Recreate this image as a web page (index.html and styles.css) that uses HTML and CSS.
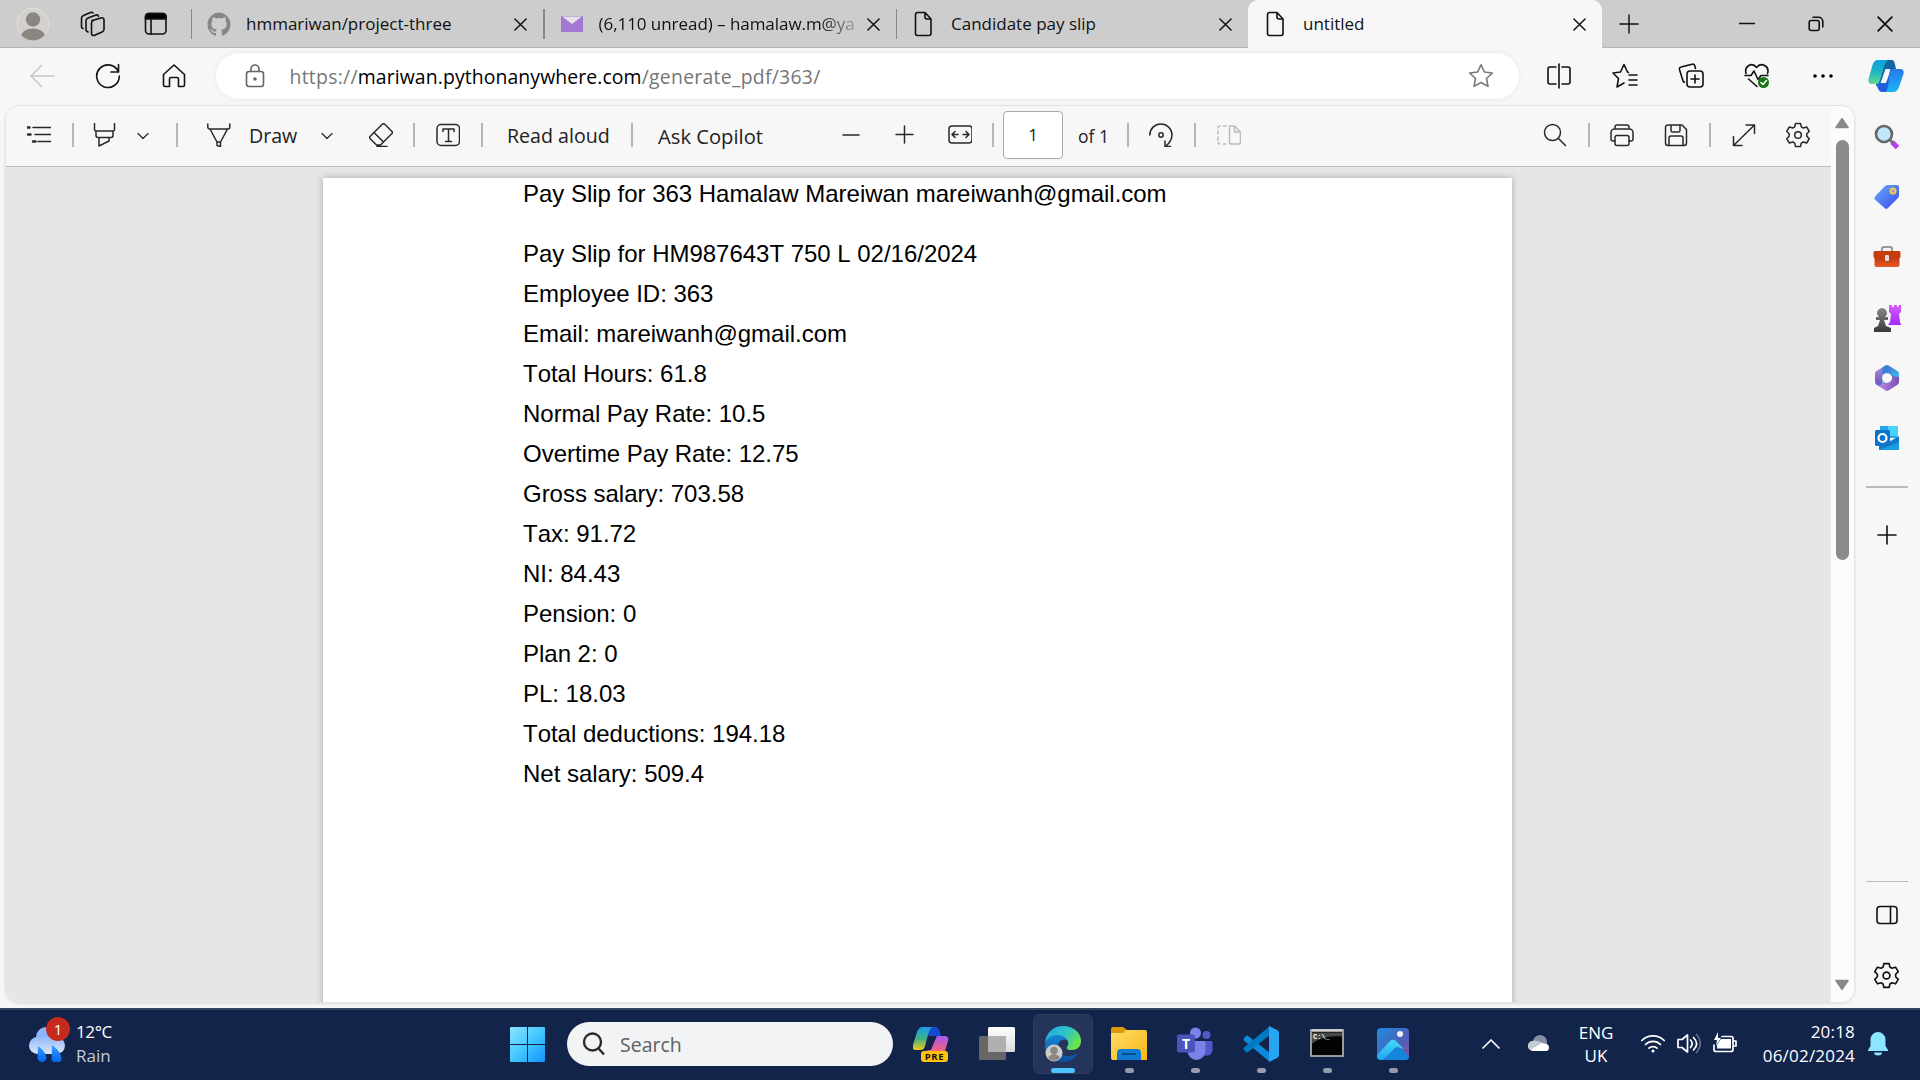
FILE: index.html
```html
<!DOCTYPE html>
<html lang="en">
<head>
<meta charset="utf-8">
<title>untitled</title>
<link rel="stylesheet" href="styles.css">
</head>
<body>
<svg class="defs" width="0" height="0">
  <defs>
    <linearGradient id="win" gradientUnits="userSpaceOnUse" x1="0" y1="0" x2="35" y2="35"><stop offset="0" stop-color="#8ae3ff"/><stop offset=".5" stop-color="#45c8ff"/><stop offset="1" stop-color="#0f94fb"/></linearGradient>
    <linearGradient id="cpa" x1="0" y1="0" x2="0" y2="1"><stop offset="0" stop-color="#0ba0dc"/><stop offset=".5" stop-color="#1fb6c4"/><stop offset="1" stop-color="#66d98b"/></linearGradient>
    <linearGradient id="cpb" x1="0" y1="0" x2="0" y2="1"><stop offset="0" stop-color="#2a78e4"/><stop offset="1" stop-color="#18b6f6"/></linearGradient>
    <linearGradient id="cpc" x1="0" y1="0" x2="0" y2="1"><stop offset="0" stop-color="#1a9cf0"/><stop offset=".5" stop-color="#3fb083"/><stop offset="1" stop-color="#efcb17"/></linearGradient>
    <linearGradient id="cpd" x1="0" y1="0" x2="0" y2="1"><stop offset="0" stop-color="#a657f0"/><stop offset="1" stop-color="#f4647e"/></linearGradient>
    <linearGradient id="edgeTop" x1="0" y1="0" x2="1" y2=".5"><stop offset="0" stop-color="#23a6e8"/><stop offset=".6" stop-color="#2fc6c4"/><stop offset="1" stop-color="#6be34c"/></linearGradient>
    <linearGradient id="edgeLow" x1="0" y1="0" x2="0" y2="1"><stop offset="0" stop-color="#1787d6"/><stop offset="1" stop-color="#0a4f9d"/></linearGradient>
    <linearGradient id="fold" x1="0" y1="0" x2="1" y2="1"><stop offset="0" stop-color="#ffdc6b"/><stop offset="1" stop-color="#f8b713"/></linearGradient>
    <linearGradient id="cloud" x1="0" y1="0" x2="0" y2="1"><stop offset="0" stop-color="#94b9fb"/><stop offset="1" stop-color="#dbe6f7"/></linearGradient>
    <linearGradient id="drop" x1="0" y1="0" x2="0" y2="1"><stop offset="0" stop-color="#37a0ff"/><stop offset="1" stop-color="#0062e8"/></linearGradient>
    <linearGradient id="tag" x1="0" y1="0" x2="1" y2="1"><stop offset="0" stop-color="#66aefc"/><stop offset="1" stop-color="#3d47ef"/></linearGradient>
    <linearGradient id="box" x1="0" y1="0" x2="0" y2="1"><stop offset="0" stop-color="#b53410"/><stop offset="1" stop-color="#e65a1e"/></linearGradient>
    <linearGradient id="pawn" x1="0" y1="0" x2="0" y2="1"><stop offset="0" stop-color="#888"/><stop offset="1" stop-color="#383838"/></linearGradient>
    <linearGradient id="rook" x1="0" y1="0" x2="0" y2="1"><stop offset="0" stop-color="#d65cf8"/><stop offset="1" stop-color="#a02bff"/></linearGradient>
    <linearGradient id="photo" x1="0" y1="0" x2="1" y2="1"><stop offset="0" stop-color="#1b8ee0"/><stop offset=".6" stop-color="#4f5fb8"/><stop offset="1" stop-color="#8a4fa5"/></linearGradient>
    <linearGradient id="hill" x1="0" y1="0" x2="0" y2="1"><stop offset="0" stop-color="#46d8fb"/><stop offset="1" stop-color="#1ea7ef"/></linearGradient>
    <linearGradient id="tv" x1="0" y1="0" x2="0" y2="1"><stop offset="0" stop-color="#fff"/><stop offset="1" stop-color="#dadada"/></linearGradient>
    <linearGradient id="m3a" x1="0" y1="1" x2="0" y2="0"><stop offset="0" stop-color="#6b55b8"/><stop offset="1" stop-color="#b186df"/></linearGradient>
    <linearGradient id="m3b" x1="0" y1="0" x2="1" y2="1"><stop offset="0" stop-color="#3a6fd0"/><stop offset="1" stop-color="#3fc3ee"/></linearGradient>
    <linearGradient id="m3c" x1="0" y1="0" x2="1" y2="0"><stop offset="0" stop-color="#c08ae0"/><stop offset="1" stop-color="#7350b5"/></linearGradient>
    <symbol id="x" viewBox="0 0 14 14"><path d="M1 1l12 12M13 1L1 13"/></symbol>
    <symbol id="doc" viewBox="0 0 20 26"><path d="M3.500 1.500h7.500l6 6.500v14.500a2 2 0 0 1-2 2H3.500a2 2 0 0 1-2-2v-19a2 2 0 0 1 2-2zM11 1.500v4.500a2 2 0 0 0 2 2h4"/></symbol>
    <symbol id="chev" viewBox="0 0 12 12"><path d="M1 3.500l5 5 5-5"/></symbol>
    <symbol id="gear" viewBox="0 0 26 26"><path d="M10.500 1.500h5l.8 3.400 1.900 1.100 3.500-1 2.600 4.300-2.500 2.500v2.400l2.500 2.500-2.600 4.300-3.500-1-1.900 1.100-.8 3.400h-5l-.8-3.400-1.900-1.100-3.500 1-2.600-4.300 2.500-2.500v-2.400L1.700 9.300 4.300 5l3.500 1 1.900-1.100z"/><circle cx="13" cy="13" r="3.300"/></symbol>
  </defs>
</svg>

<header class="tabstrip">
  <div class="tab-tools">
    <svg class="avatar" viewBox="0 0 34 34"><circle cx="17" cy="17" r="16" fill="#d3d1cd" stroke="#e2e0d8"/><circle cx="17" cy="12.500" r="7.200" fill="#8b8680"/><path d="M5 28a12.500 9 0 0 1 24 0 16 16 0 0 1-24 0z" fill="#8b8680"/></svg>
    <svg class="ln i26" viewBox="0 0 26 26"><path d="M12 9.500l9-2.500a2 2 0 0 1 3 2v9.500a3 3 0 0 1-2 2.500l-8 3.500a2 2 0 0 1-2.500-2V12a2.600 2.600 0 0 1 2-2.500M8 21l-.8-.5A2 2 0 0 1 6 19V9.500A3 3 0 0 1 8 7l8-3a2 2 0 0 1 2.500 1.200M3 17.500A2 2 0 0 1 1.500 16V7A3 3 0 0 1 3.500 4.500l7-3A2 2 0 0 1 13 2"/></svg>
    <svg class="ln i24" viewBox="0 0 24 24"><rect x="1.500" y="1.500" width="20.500" height="20.500" rx="3.500"/><path d="M1.500 7V4.500a3 3 0 0 1 3-3H19a3 3 0 0 1 3 3V7z" fill="#000"/><path d="M7 7v15"/></svg>
  </div>
  <div class="tab">
    <svg class="i24" viewBox="0 0 24 24"><path fill="#84878a" d="M12 .5a12 12 0 0 0-3.800 23.200c.6.100.8-.3.800-.6v-2.200c-3.300.7-4-1.400-4-1.400-.6-1.400-1.300-1.800-1.300-1.800-1.100-.7.100-.7.100-.7 1.200.1 1.800 1.200 1.800 1.200 1.100 1.900 2.800 1.300 3.500 1 .1-.8.400-1.300.8-1.600-2.700-.3-5.500-1.300-5.500-6 0-1.300.5-2.400 1.200-3.200-.1-.3-.5-1.500.1-3.200 0 0 1-.3 3.300 1.200a11.500 11.500 0 0 1 6 0C17.300 5 18.300 5.300 18.300 5.300c.7 1.700.2 2.900.1 3.200.8.800 1.200 1.900 1.200 3.200 0 4.700-2.800 5.700-5.500 6 .4.400.8 1.100.8 2.200v3.200c0 .3.200.7.800.6A12 12 0 0 0 12 .5z"/></svg>
    <span class="tab-title">hmmariwan/project-three</span><svg class="close ln"><use href="#x"/></svg>
  </div>
  <div class="tab">
    <svg class="i24" viewBox="0 0 24 24"><rect x="1" y="4" width="22" height="16" rx="1" fill="#a378d2"/><path d="M2 4.500h20L12 12z" fill="#e6e1ea"/></svg>
    <span class="tab-title long">(6,110 unread) – hamalaw.m@ya</span><svg class="close ln"><use href="#x"/></svg>
  </div>
  <div class="tab">
    <svg class="ln doc"><use href="#doc"/></svg>
    <span class="tab-title">Candidate pay slip</span><svg class="close ln"><use href="#x"/></svg>
  </div>
  <div class="tab active">
    <svg class="ln doc"><use href="#doc"/></svg>
    <span class="tab-title">untitled</span><svg class="close ln"><use href="#x"/></svg>
  </div>
  <svg class="newtab ln" viewBox="0 0 22 22"><path d="M11 1v20M1 11h20"/></svg>
  <div class="win-controls">
    <svg class="ln i16" viewBox="0 0 16 16"><path d="M.5 7.500h15"/></svg>
    <svg class="ln i16" viewBox="0 0 16 16"><rect x="1.200" y="4.500" width="10" height="10" rx="2"/><path d="M5 1.200h5.500a4.300 4.300 0 0 1 4.300 4.300V11"/></svg>
    <svg class="ln i16" viewBox="0 0 14 14"><use href="#x"/></svg>
  </div>
</header>

<nav class="navbar">
  <svg class="ln i26 dim" viewBox="0 0 26 26"><path d="M25 13H2M12.500 2.500L2 13l10.500 10.500"/></svg>
  <svg class="ln i26" viewBox="0 0 26 26"><path d="M23.500 9A11.300 11.300 0 1 0 24.300 13M23.500 1.500V9H16"/></svg>
  <svg class="ln i26" viewBox="0 0 26 26"><path d="M2.500 11.500L13 2l10.500 9.500V22a1.500 1.500 0 0 1-1.500 1.500h-4.500V16a1.500 1.500 0 0 0-1.500-1.500h-6A1.500 1.500 0 0 0 8.500 16v7.500H4A1.500 1.500 0 0 1 2.500 22z"/></svg>
  <div class="address">
    <svg class="ln i24 lock" viewBox="0 0 24 24"><rect x="3.500" y="7.500" width="17" height="15" rx="2.500"/><path d="M8 7.500V5a4 4 0 0 1 8 0v2.500"/><circle cx="12" cy="15" r="1" fill="#666"/></svg>
    <span class="url">https://<b>mariwan.pythonanywhere.com</b>/generate_pdf/363/</span>
    <svg class="ln i26 star" viewBox="0 0 26 26"><path d="M13 1.800l3.400 7.200 7.900 1-5.800 5.500 1.500 7.900-7-3.900-7 3.900 1.500-7.900L1.700 10l7.900-1z"/></svg>
  </div>
  <svg class="ln i26 split" viewBox="0 0 26 26"><path d="M13 1v24M10 4H4a2 2 0 0 0-2 2v13a2 2 0 0 0 2 2h6M16 4h6a2 2 0 0 1 2 2v13a2 2 0 0 1-2 2h-6"/></svg>
  <svg class="ln i26" viewBox="0 0 26 26"><path d="M16.500 9.500l-1-.5L12 1.500 8.500 9l-7.500 1 5.500 5.500L5 24l7-4M17 12h8M17 17h8M17 22h8"/></svg>
  <svg class="ln i26" viewBox="0 0 26 26"><rect x="9" y="8" width="16" height="16" rx="3"/><path d="M17 12v8M13 16h8M17.500 5.500l-.8-3A2 2 0 0 0 14 1.300L3 4a2 2 0 0 0-1.500 2.700l3.500 11a2 2 0 0 0 1.500 1.500"/></svg>
  <svg class="ln i26" viewBox="0 0 26 26"><path d="M2 10.500C0 3 8-1.500 12.500 4.500 17-1.500 26 3 23.500 10.500M1 12.500h6l3-4.500 4 8.500 3-4h7M4.500 16l8.500 7.500"/><circle cx="19.500" cy="19.500" r="5.500" fill="#147514" stroke="none"/><path d="M17 19.500l2 2 3.500-4" stroke="#fff"/></svg>
  <svg class="i26" viewBox="0 0 26 26"><circle cx="5" cy="13" r="1.800"/><circle cx="13" cy="13" r="1.800"/><circle cx="21" cy="13" r="1.800"/></svg>
  <svg class="copilot" viewBox="0 0 36 34"><path d="M10 1h13c3 0 3.500 2 4 4.500L28 10h-8l-5 17H8z" fill="#12669f"/><path d="M8 24h10l5-14h8l-7 21c-1 2-2 2-5 2h-5c-3 0-4-3-6-9z" fill="#235de0"/><path d="M10 1h10c-2 1-3 3-4 7l-4 13c-1 3-2 4-4 4H4c-3 0-4-2-3.500-5L4.500 6C5.500 3 7 1 10 1z" fill="url(#cpa)"/><path d="M17.500 10H22l-4.500 14h-5z" fill="#f7f7f7"/><path d="M22 10h9.500c4 0 4.500 2 4 5L31 28c-1 3-3 5-6 5h-8c2-1 2-2 3-5z" fill="url(#cpb)"/></svg>
</nav>

<div class="middle">
  <main class="frame">
    <div class="viewer">
      <div class="pdfbar">
        <svg class="ln i24" viewBox="0 0 24 24"><path d="M6 4.500h18M8 11.500h16M11 18.500h13"/><path d="M0 4.500h2.500M1 11.500h2.500M6 18.500h2.500" stroke-width="2.500"/></svg>
        <i></i>
        <svg class="ln i24" viewBox="0 0 24 24"><path d="M1.500 0v6.500a1.500 1.500 0 0 0 1.500 1.500h17a1.500 1.500 0 0 0 1.500-1.500V0M3 8v4.500a2 2 0 0 0 2 2h13a2 2 0 0 0 2-2V8M6 14.500V23l10-5v-3.500"/></svg>
        <svg class="ln c12"><use href="#chev"/></svg>
        <i></i>
        <svg class="ln i24" viewBox="0 0 24 24"><path d="M.8 1v3a2 2 0 0 0 2 2h18a2 2 0 0 0 2-2V1M3 6l7 13h3.500l7-13M10 19v3.500l3.500 1V19"/></svg>
        <span>Draw</span>
        <svg class="ln c12"><use href="#chev"/></svg>
        <svg class="ln i24" viewBox="0 0 24 24"><path d="M13 1.500l-12 12a1.500 1.500 0 0 0 0 2l6.500 6.500h4L23 10.500a1.500 1.500 0 0 0 0-2l-7-7a2 2 0 0 0-3 0zM5 9.500l9.500 9.500M8 23.500h10"/></svg>
        <i></i>
        <svg class="ln i24" viewBox="0 0 24 24"><rect x="1" y="1.500" width="22.500" height="21" rx="4"/><path d="M7 8.500V6h11v2.500M12.500 6v12.500M9.500 18.500h6"/></svg>
        <i></i>
        <span class="read">Read aloud</span>
        <i></i>
        <span class="ask">Ask Copilot</span>
        <svg class="ln i24" viewBox="0 0 24 24"><path d="M4 12h16"/></svg>
        <svg class="ln i24" viewBox="0 0 24 24"><path d="M4 11.500h17M12.500 3v17"/></svg>
        <svg class="ln i24" viewBox="0 0 24 24"><rect x="1" y="3" width="23" height="17" rx="3"/><path d="M10 11.500H4.500M7 8.500l-3 3 3 3M15 11.500h5.500M18 8.500l3 3-3 3"/></svg>
        <i></i>
        <span class="pagebox">1</span>
        <span class="of">of 1</span>
        <i></i>
        <svg class="ln i24" viewBox="0 0 24 24"><path d="M.8 12A11 11 0 0 1 12 1a11 11 0 0 1 11 11c0 4-2 7.500-6 11M16 18v5.500h5.500"/><circle cx="12" cy="12" r="2.200"/></svg>
        <i></i>
        <svg class="ln i24 dim2" viewBox="0 0 24 24"><path d="M12.500 3h5l6 6v10a2 2 0 0 1-2 2h-7a2 2 0 0 1-2-2zM17.500 3v6h6M9 3H6.500M3 3a2 2 0 0 0-2 2M1 8v3M1 14v3M1 19.500A2 2 0 0 0 3 21M6.500 21H9"/></svg>
        <svg class="ln i24" viewBox="0 0 24 24"><circle cx="9.500" cy="9.500" r="8"/><path d="M15.500 15.500l7 7"/></svg>
        <i></i>
        <svg class="ln i24" viewBox="0 0 24 24"><path d="M5 18H3a2 2 0 0 1-2-2V9.500A3.500 3.500 0 0 1 4.500 6h15A3.500 3.500 0 0 1 23 9.500V16a2 2 0 0 1-2 2h-2M5 6V4a2 2 0 0 1 2-2h10a2 2 0 0 1 2 2v2"/><rect x="5" y="12.500" width="14" height="10" rx="2"/></svg>
        <svg class="ln i24" viewBox="0 0 24 24"><path d="M4 2h14l4.500 4.500V20a2.500 2.500 0 0 1-2.500 2.500H4A2.500 2.500 0 0 1 1.500 20V4.500A2.500 2.500 0 0 1 4 2zM7 2v5.500a1.500 1.500 0 0 0 1.500 1.500h6A1.500 1.500 0 0 0 16 7.500V2M5 22.500V15a2 2 0 0 1 2-2h10a2 2 0 0 1 2 2v7.500"/></svg>
        <i></i>
        <svg class="ln i24" viewBox="0 0 24 24"><path d="M14 2h8.500v8.500M22.500 2L1.500 22.500M1.500 13.500v9H10"/></svg>
        <svg class="ln i26 options"><use href="#gear"/></svg>
      </div>
      <div class="canvas">
        <article class="page">
          <h1>Pay Slip for 363 Hamalaw Mareiwan mareiwanh@gmail.com</h1>
          <p>Pay Slip for HM987643T 750 L 02/16/2024</p>
          <p>Employee ID: 363</p>
          <p>Email: mareiwanh@gmail.com</p>
          <p>Total Hours: 61.8</p>
          <p>Normal Pay Rate: 10.5</p>
          <p>Overtime Pay Rate: 12.75</p>
          <p>Gross salary: 703.58</p>
          <p>Tax: 91.72</p>
          <p>NI: 84.43</p>
          <p>Pension: 0</p>
          <p>Plan 2: 0</p>
          <p>PL: 18.03</p>
          <p>Total deductions: 194.18</p>
          <p>Net salary: 509.4</p>
        </article>
      </div>
    </div>
    <div class="scroll">
      <svg viewBox="0 0 14 11"><path d="M7 1.500L12.500 9.500h-11z"/></svg>
      <div class="thumb"></div>
      <svg class="down" viewBox="0 0 14 11"><path d="M7 9.500L12.500 1.500h-11z"/></svg>
    </div>
  </main>
  <aside class="sidebar">
    <svg viewBox="0 0 28 28"><path d="M19 19l5.500 5.500" stroke="#b83cf5" stroke-width="5"/><path d="M16 16l4 4" stroke="#777" stroke-width="3"/><circle cx="11" cy="11" r="8" fill="#bfe6fb" stroke="#666" stroke-width="2.600"/></svg>
    <svg viewBox="0 0 28 28"><path d="M14 2h10a2 2 0 0 1 2 2v9a3 3 0 0 1-1 2L15 25a2.500 2.500 0 0 1-3.500 0L2.500 17a2.500 2.500 0 0 1 0-4L12 3z" fill="url(#tag)"/><circle cx="20" cy="8" r="2.600" fill="#8b9cf9" stroke="#ffd02c" stroke-width="1.800"/></svg>
    <svg viewBox="0 0 28 28"><path d="M9 8V6a2 2 0 0 1 2-2h6a2 2 0 0 1 2 2v2" fill="none" stroke="#999" stroke-width="2.200"/><rect x="1.500" y="13" width="25" height="11" rx="2" fill="url(#box)"/><rect x=".5" y="8" width="27" height="7" rx="1.500" fill="#c53d0d"/><rect x="12" y="12" width="4" height="6" rx="1" fill="#ddd"/></svg>
    <svg viewBox="0 0 28 28"><path d="M16 1h3v2h2V1h3v2h1.500V1H28v7l-2 2 1 8 1 3H15l2-3 1-8-2-2z" fill="url(#rook)"/><path d="M1 28v-4l4-2 2-6H3v-3h3a5 5 0 1 1 6 0h3v3h-4l2 6 5 2v4z" fill="url(#pawn)"/></svg>
    <svg viewBox="0 0 28 28"><path d="M13 1.300a3 3 0 0 1 2 0L24.500 7A3 3 0 0 1 26 9.500V17l-7-4.500L12 9 9 11V3.800z" fill="url(#m3b)"/><path d="M13 1.300L9.500 3.500V18l-2 5L3.500 20.700A3 3 0 0 1 2 18V9.500A3 3 0 0 1 3.500 7z" fill="url(#m3a)"/><path d="M13 1.300L9.500 3.500V19L3 20.500c3 0 6.500 1 9.500-.5l1-10L20 6z" fill="#3f7fd6" opacity=".75"/><path d="M26 13v5a3 3 0 0 1-1.500 2.700L15.500 26.500a3 3 0 0 1-3 0L4 21c4 1 8-1 15-5.500V12z" fill="url(#m3c)"/><circle cx="14" cy="14" r="4.800" fill="#f7f7f7"/></svg>
    <svg viewBox="0 0 28 28"><path d="M7 2h17v12H7z" fill="#28a8ea"/><path d="M15 2h10v10H15z" fill="#48d3fa"/><path d="M6 13l10 5 10-6v14H6z" fill="#1479c9"/><path d="M6 26l20-8v8z" fill="#1b9de2"/><rect x="2" y="6" width="15" height="16" rx="1.500" fill="#0874ca"/><circle cx="9.500" cy="14" r="4" fill="none" stroke="#fff" stroke-width="2.200"/></svg>
    <hr>
    <svg class="ln add" viewBox="0 0 28 28"><path d="M14 5v18M5 14h18"/></svg>
    <hr class="low">
    <svg class="ln panel" viewBox="0 0 28 28"><rect x="4" y="5.500" width="20" height="17" rx="3"/><path d="M17.500 5.500v17"/></svg>
    <svg class="ln setting"><use href="#gear"/></svg>
  </aside>
</div>

<footer class="taskbar">
  <div class="weather">
    <svg viewBox="0 0 36 36"><circle cx="17" cy="11" r="10" fill="#8bb4fa"/><rect x="0" y="11" width="36" height="17" rx="8.500" fill="url(#cloud)"/><path d="M9 20c5 4 8 7 8.500 12a4.500 4 0 0 1-9 0zM23 19c5 4 9 7 9.500 14a5 4 0 0 1-10 0z" fill="url(#drop)"/></svg>
    <b class="badge">1</b>
    <div><span>12°C</span><span class="rain">Rain</span></div>
  </div>
  <svg class="start" viewBox="0 0 35 35"><path fill="url(#win)" d="M1 0h16v17H0V1a1 1 0 0 1 1-1zm17 0h16a1 1 0 0 1 1 1v16H18zM0 18h17v17H1a1 1 0 0 1-1-1zm18 0h17v16a1 1 0 0 1-1 1H18z"/></svg>
  <div class="search"><svg viewBox="0 0 24 24"><circle cx="10.500" cy="10" r="8.500"/><path d="M16.500 16.500l5.500 6"/></svg>Search</div>
  <div class="apps">
    <div class="app"><svg viewBox="0 0 36 36"><path d="M8 1h14c3 0 4 2 5 5l1 4h-6l-6 0-4-6z" fill="#1649ce"/><path d="M10 1h10c-3 1-4 4-5 8l-3 11c-1 3-2 4-5 4H3c-3 0-4-2-3-5l4-13C5 3 7 1 10 1z" fill="url(#cpc)"/><path d="M24 10h7c4 0 5 2 4 5l-3 10H8c6 0 9 0 11-4z" fill="url(#cpd)"/><path d="M18 10h5l-5 14h-5z" fill="#12244a"/></svg><em>PRE</em></div>
    <div class="app"><svg viewBox="0 0 36 36"><rect y="10" width="27" height="24" rx="1.500" fill="#666"/><rect x="9" y="1" width="27" height="25" rx="1.500" fill="url(#tv)"/><path d="M9 10h18v16H9z" fill="#b0b0b0"/></svg></div>
    <div class="app on"><svg viewBox="0 0 36 36"><path d="M0 17C1 6 9 0 18 0c11 0 18 7 18 15 0 6-4 9-9 9-6 0-6-2-4.500-4 3-4-2-10-8.500-10C7 10 2 13 0 17z" fill="url(#edgeTop)"/><path d="M0 20C0 13 5 9 12 9c5 0 9 2 10 5-6-2-9 2-9 7 0 9 9 12 20 6-4 6-9 9-15 9C8 36 0 29 0 20z" fill="url(#edgeLow)"/><circle cx="9" cy="27" r="8.500" fill="#cfcdca"/><circle cx="9" cy="24.500" r="3.800" fill="#8b8680"/><path d="M3 32c2-5 10-5 12 0a8 8 0 0 1-12 0z" fill="#8b8680"/></svg><u></u></div>
    <div class="app"><svg viewBox="0 0 36 36"><path d="M0 3a2 2 0 0 1 2-2h10l4 3v5H0z" fill="#dd9a05"/><path d="M0 7h12l3-3h19a2 2 0 0 1 2 2v28H2a2 2 0 0 1-2-2z" fill="url(#fold)"/><path d="M6 34V27a4 4 0 0 1 4-4h16a4 4 0 0 1 4 4v7z" fill="#0f7ad2"/><path d="M11 28h14" stroke="#074c91" stroke-width="2"/></svg><u></u></div>
    <div class="app"><svg viewBox="0 0 36 36"><circle cx="29.500" cy="9" r="4" fill="#5059c9"/><path d="M25 15h9a1.500 1.500 0 0 1 1.500 1.500V24a6 6 0 0 1-9 5z" fill="#5059c9"/><circle cx="18.500" cy="7" r="5.500" fill="#7b83eb"/><path d="M10 15h17a1.500 1.500 0 0 1 1.500 1.500V25a9 9 0 0 1-18 0z" fill="#7b83eb"/><rect y="8.500" width="18" height="18" rx="2" fill="#4b53bc"/></svg><strong>T</strong><u></u></div>
    <div class="app"><svg viewBox="0 0 36 36"><path d="M4.500 9.500L27 27v9L1 14.500a2 2 0 0 1 0-2.500l2-2.200z" fill="#0b8bd9"/><path d="M4.500 26.500L27 9V0L1 21.500a2 2 0 0 0 0 2.500l2 2.200z" fill="#0079c4"/><path d="M26 0l8 4a3 3 0 0 1 2 3v22a3 3 0 0 1-2 3l-8 4z" fill="#27a5f2"/></svg><u></u></div>
    <div class="app"><svg viewBox="0 0 36 36"><rect x="2" y="4" width="32" height="26" fill="#030303" stroke="#b9bcc1" stroke-width="1.600"/><path d="M3 4.500h30" stroke="#d2d2d2" stroke-width="2.500"/><path d="M3 6.500h30v4C20 9 8 13 3 18z" fill="#484848"/></svg><small>C:\_</small><u></u></div>
    <div class="app"><svg viewBox="0 0 36 36"><rect x="2" y="2" width="32" height="32" rx="4" fill="url(#photo)"/><path d="M9 34l11-12a4 4 0 0 1 5 0l9 8a4 4 0 0 1-4 4z" fill="#1586db"/><path d="M2 29L15 15a4 4 0 0 1 6 0l8 8-4-1a4 4 0 0 0-5 0L8 34H6a4 4 0 0 1-4-4z" fill="url(#hill)"/><circle cx="25" cy="8" r="3" fill="#f3eef5"/></svg><u></u></div>
  </div>
  <div class="tray">
    <svg class="w up" viewBox="0 0 24 24"><path d="M4 16l8-8 8 8"/></svg>
    <svg class="w od" viewBox="0 0 24 24"><circle cx="12" cy="11" r="7" fill="#848fa5" stroke="none"/><path d="M5 20a5 5 0 0 1 0-10c5-1 9 3 14 3a4 4 0 0 1 0 7z" fill="#fff" stroke="none"/><path d="M0 15a5 5 0 0 1 5-5c4-1 6 1 9 2L2 19z" fill="#c5cad3" stroke="none"/></svg>
    <div class="lang"><span>ENG</span><span>UK</span></div>
    <svg class="w" viewBox="0 0 24 24"><path d="M.8 9.500a16 16 0 0 1 22.400 0M4.500 13.500a10.600 10.600 0 0 1 15 0M8 17.200a5.700 5.700 0 0 1 8 0"/><circle cx="12" cy="20" r="1.500" fill="#fff" stroke="none"/></svg>
    <svg class="w" viewBox="0 0 24 24"><path d="M1 8.500h4L10.500 4v17L5 16.500H1zM13.500 9c2 2 2 5 0 7.500M16.500 6.500c4 4 4 8.500 0 12.500"/><path d="M19.500 3.500c5 5 5 13 0 18" opacity=".35"/></svg>
    <svg class="w" viewBox="0 0 24 24"><path d="M9 5.500h9a2 2 0 0 1 2 2v11a2 2 0 0 1-2 2H3a2 2 0 0 1-2-2V14M20 10h3v5h-3"/><path d="M8 8h10v9.500H4V14z" fill="#fff" stroke="none"/><path d="M5 1L1 9h3l-1 6 5-8H5z" fill="#fff" stroke="none"/></svg>
    <div class="clock"><span>20:18</span><span>06/02/2024</span></div>
    <svg class="bell" viewBox="0 0 20 24"><path d="M10 0a7.500 7.500 0 0 1 7.500 7.500V14l2.500 4v1H0v-1l2.500-4V7.500A7.500 7.500 0 0 1 10 0zM6 20.500h8a4 3 0 0 1-8 0z" fill="#8be6ff"/></svg>
  </div>
</footer>
</body>
</html>
```
FILE: styles.css
```css
* { box-sizing: border-box; }
body {
  margin: 0;
  width: 1920px;
  height: 1080px;
  overflow: hidden;
  display: flex;
  flex-direction: column;
  background: #f7f7f7;
  color: #111;
  font-family: "Open Sans", "Noto Sans", sans-serif;
}
svg { display: block; flex: none; }
.defs { position: absolute; }
.ln { fill: none; stroke: #111; stroke-width: 1.6; stroke-linejoin: round; stroke-linecap: round; }
.i16 { width: 16px; height: 16px; }
.i24 { width: 24px; height: 24px; }
.i26 { width: 26px; height: 26px; }
.c12 { width: 12px; height: 12px; }

/* Tab strip */
.tabstrip { height: 48px; flex: none; display: flex; background: #cdcdcd; box-shadow: inset 0 -2px 1px -1px #b4b4b4; }
.tab-tools { width: 190.5px; display: flex; align-items: center; padding-left: 16px; }
.avatar { width: 34px; height: 34px; margin-right: 30px; }
.tab-tools .i26 { margin-right: 38px; }
.tab { width: 352.5px; display: flex; align-items: center; padding: 0 16px; position: relative; }
.tab:not(.active)::before { content: ""; width: 1.5px; height: 30px; background: #888; margin-left: -16px; margin-right: 15px; }
.tab.active { width: 353.5px; }
.tab-title { flex: 1; font-size: 17px; line-height: 24px; margin-left: 15px; white-space: nowrap; overflow: hidden; }
.long { max-width: 257px; margin-right: auto; letter-spacing: -0.05px; -webkit-mask-image: linear-gradient(to right, #000 86%, rgba(0,0,0,.2)); mask-image: linear-gradient(to right, #000 86%, rgba(0,0,0,.2)); }
.doc { width: 20px; height: 26px; margin-left: 2px; margin-right: 2px; }
.close { width: 13px; height: 13px; }
.active { background: #f7f7f7; border-radius: 10px 10px 0 0; }
.newtab { width: 20px; height: 20px; margin: 14px 0 0 17px; }
.win-controls { margin-left: auto; padding-right: 27px; display: flex; gap: 53px; align-items: center; }

/* Navigation bar */
.navbar { height: 57px; flex: none; display: flex; align-items: center; padding: 0 0 1px 28.5px; }
.navbar > .i26 { margin-right: 40px; }
.dim { stroke: #c8c8c8; }
.address { width: 1303px; height: 46px; margin-left: -11px; margin-right: 27px; border-radius: 23px; background: #fff; display: flex; align-items: center; padding: 0 25px 0 27px; box-shadow: 0 0 5px #e6e6e6; }
.lock { stroke: #666; }
.url { flex: 1; margin-left: 23px; font-size: 19.4px; color: #767676; white-space: nowrap; letter-spacing: .27px; }
.url b { font-weight: 400; color: #000; letter-spacing: .1px; }
.star { stroke: #777; }
.copilot { width: 36px; height: 34px; margin-left: -8px; }

/* Page frame */
.middle { flex: 1; display: flex; min-height: 0; }
.frame { width: 1850px; margin: 0 0 5px 5px; border: 1px solid #e4e4e4; border-radius: 14px; overflow: hidden; display: flex; box-shadow: 0 1px 3px #ddd; }
.viewer { width: 1825px; display: flex; flex-direction: column; }
.pdfbar {
  height: 61px; flex: none; padding: 0 0 2px 21px; border-bottom: 1.5px solid #bbb; background: #f7f7f7;
  display: grid; align-items: center; justify-items: start; color: #222; font-size: 19.6px; white-space: nowrap;
  grid-template-columns: 45px 21px 44px 39px 31px 42px 72px 48px 44px 23px 45px 26px 124px 27px 181px 53px 56px 44px 11px 75px 49px 22px 45px 23px 326px 45px 22px 54px 45px 23px 53px 46px;
}
.pdfbar .ln { stroke: #292929; stroke-width: 1.5; }
.pdfbar .c12 { margin-top: 2px; stroke-width: 1.2; }
.pdfbar .dim2 { stroke: #bbb; }
.pdfbar .options { margin-top: -1px; }
.pdfbar i { width: 1.5px; height: 24px; background: #b5b5b5; }
.pdfbar span:not(.pagebox) { padding-top: 1px; }
.pdfbar .ask { font-size: 20.2px; }
.pagebox { width: 60px; height: 48px; border: 1.5px solid #aaa; border-radius: 4px; background: #fff; font-size: 17px; line-height: 46px; text-align: center; }
.pdfbar .of { font-size: 17.5px; }
.canvas { flex: 1; background: #e6e6e6; padding: 11px 319px 0 317px; overflow: hidden; }
.page { height: 900px; background: #fff; padding-left: 200px; box-shadow: 0 0 7px #aaa; font: 24px/40px "Liberation Sans", Arial, sans-serif; font-kerning: none; letter-spacing: -.02px; color: #000; white-space: nowrap; }
.page h1 { font-size: 24px; font-weight: 400; margin: 0; line-height: 32px; }
.page p { margin: 0; }
.page h1 + p { margin-top: 24px; }
.scroll { flex: 1; background: #fcfcfc; display: flex; flex-direction: column; align-items: center; padding: 11px 1px 11px 0; }
.scroll svg { width: 16px; height: 12px; fill: #888; stroke: #888; stroke-width: 1.500; stroke-linejoin: round; }
.thumb { width: 13px; height: 420px; margin-top: 11px; border-radius: 7px; background: #8b8b8b; }
.scroll .down { margin-top: auto; }

/* Sidebar */
.sidebar { flex: 1; display: flex; flex-direction: column; align-items: center; padding: 18px 2px 0 0; }
.sidebar svg { width: 28px; height: 28px; margin-bottom: 32.2px; }
.sidebar hr { width: 42px; height: 1.5px; border: 0; background: #bbb; margin: 2px 0 33px; flex: none; }
.sidebar .low { margin: auto 0 19px; }
.sidebar .panel { margin-bottom: 33px; }
.sidebar .setting { width: 27px; height: 27px; margin-bottom: 19px; }

/* Taskbar */
.taskbar { height: 72px; flex: none; display: flex; align-items: center; background: #12244a; border-top: 2px solid #36435d; padding-bottom: 2px; color: #fff; font-size: 17px; }
.weather { width: 510px; padding-left: 29px; display: flex; align-items: center; position: relative; }
.weather svg { width: 36px; height: 36px; }
.weather div { display: flex; flex-direction: column; line-height: 24px; margin-left: 11px; letter-spacing: -.4px; }
.weather .rain { color: #c5cad6; letter-spacing: 0; }
.badge { position: absolute; left: 46px; top: -3px; width: 24px; height: 24px; border-radius: 12px; background: #c42b1c; font-weight: 400; font-size: 15px; line-height: 24px; text-align: center; }
.start { width: 35px; height: 35px; }
.search { width: 326px; height: 44px; margin-left: 22px; border-radius: 22px; background: #f2f3f5; color: #606060; font-size: 19.5px; display: flex; align-items: center; gap: 14px; padding-left: 15px; }
.search svg { width: 24px; height: 24px; fill: none; stroke: #2a2a2a; stroke-width: 2.4; }
.apps { display: flex; gap: 6px; margin-left: 8px; }
.app { width: 60px; height: 60px; border-radius: 7px; display: flex; justify-content: center; align-items: center; position: relative; }
.app svg { width: 36px; height: 36px; }
.on { background: #24345a; border: 1px solid #303e62; }
.app u { position: absolute; bottom: 1px; left: 25.500px; width: 9px; height: 5px; border-radius: 3px; background: #969cae; }
.on u { left: 17px; bottom: 0; width: 24px; background: #4cc2ff; }
.app em { position: absolute; left: 20px; top: 37px; width: 27px; height: 11px; border-radius: 3px; background: #ffc20e; color: #111; font: 700 9.500px/11px "Open Sans", sans-serif; letter-spacing: .7px; text-align: center; }
.app strong { position: absolute; left: 12px; top: 20px; width: 18px; font-size: 14px; line-height: 19px; text-align: center; }
.app small { position: absolute; left: 16px; top: 19px; font: 700 7px/8px "Liberation Mono", monospace; }
.tray { margin-left: auto; padding-right: 32px; display: flex; align-items: center; }
.w { width: 24px; height: 24px; margin-right: 12px; fill: none; stroke: #fff; stroke-width: 1.7; stroke-linejoin: round; stroke-linecap: round; }
.up { margin-right: 25px; }
.od { margin-right: 23px; }
.w:not(.up) { position: relative; top: -1px; }
.lang { width: 42px; margin-right: 24px; display: flex; flex-direction: column; line-height: 23px; text-align: center; }
.clock { width: 106px; display: flex; flex-direction: column; line-height: 24px; text-align: right; letter-spacing: .2px; }
.bell { width: 20px; height: 24px; margin-left: 13px; }
```
